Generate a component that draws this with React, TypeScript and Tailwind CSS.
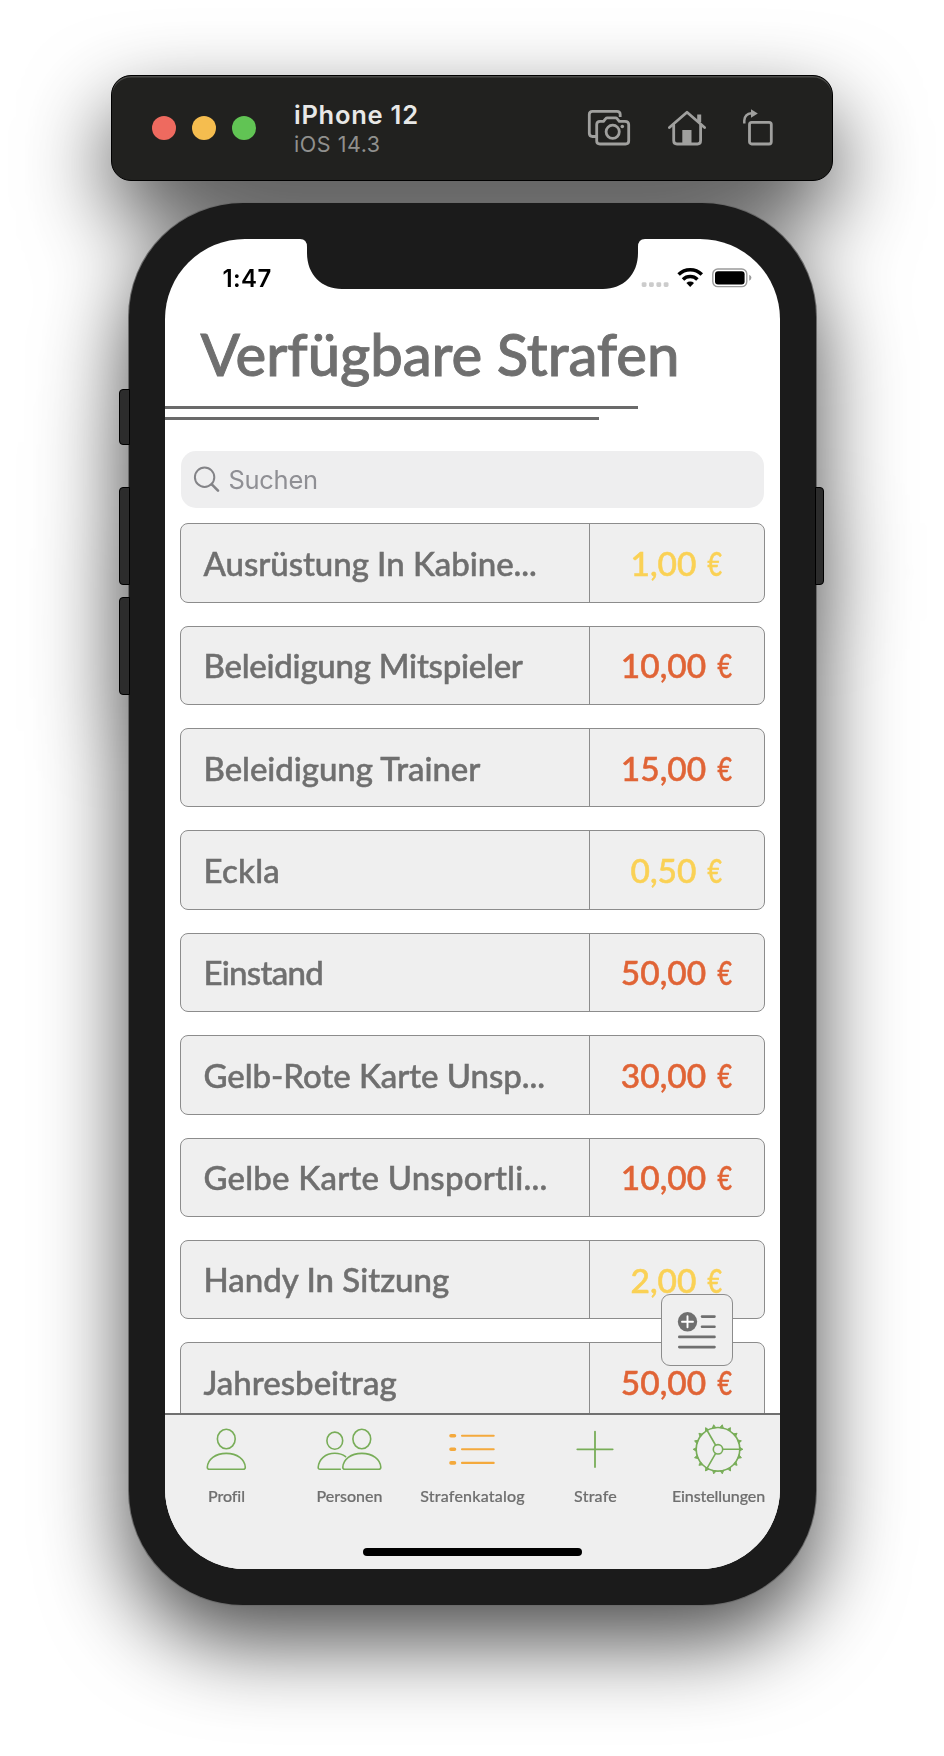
type Penalty = { name: string; tracking: string; amount: string; high: boolean };

const penalties: Penalty[] = [
  { name: "Ausrüstung In Kabine...", tracking: "tracking-[-0.050px]", amount: "1,00", high: false },
  { name: "Beleidigung Mitspieler", tracking: "tracking-[-0.250px]", amount: "10,00", high: true },
  { name: "Beleidigung Trainer", tracking: "tracking-[-0.050px]", amount: "15,00", high: true },
  { name: "Eckla", tracking: "tracking-[0.2px]", amount: "0,50", high: false },
  { name: "Einstand", tracking: "tracking-[-0.7px]", amount: "50,00", high: true },
  { name: "Gelb-Rote Karte Unsp...", tracking: "tracking-[-0.050px]", amount: "30,00", high: true },
  { name: "Gelbe Karte Unsportli...", tracking: "tracking-[0.2px]", amount: "10,00", high: true },
  { name: "Handy In Sitzung", tracking: "tracking-[0px]", amount: "2,00", high: false },
  { name: "Jahresbeitrag", tracking: "tracking-[0px]", amount: "50,00", high: true },
];

const sans = "font-[Inter,'Liberation_Sans',sans-serif]";
const display = "font-[Lato,'Open_Sans',sans-serif]";

function CameraIcon() {
  return (
    <svg width="44" height="40" viewBox="0 0 44 40" fill="none" stroke="#a0a09e" strokeWidth="2.8" strokeLinejoin="round">
      <path d="M10 28.5H5.5Q2.3 28.5 2.3 25.3V6.500Q2.3 3.3 5.5 3.3H30Q33.2 3.3 33.2 6.5V9" />
      <path d="M13 13.3H16.5L18.7 10.6Q19.3 9.8 20.3 9.8H28.5Q29.5 9.8 30.1 10.6L32.3 13.3H38Q41.7 13.3 41.7 16.6V33Q41.7 36 38.500 36H13Q9.7 36 9.7 33V16.600Q9.7 13.3 13 13.3Z" />
      <circle cx="25.7" cy="23.8" r="6.6" />
      <circle cx="35.3" cy="18.500" r="1.8" fill="#a0a09e" stroke="none" />
    </svg>
  );
}

function HomeIcon() {
  return (
    <svg width="40" height="40" viewBox="0 0 40 40" fill="none" stroke="#a0a09e" strokeWidth="2.8" strokeLinejoin="round" strokeLinecap="round">
      <path d="M2.4 19.500L20 4.2L37.6 19.500" />
      <path d="M6.7 17V32.500Q6.7 36 10 36H30.500Q33.6 36 33.6 32.500V17" />
      <path d="M32.2 6.500V14" strokeWidth="4" strokeLinecap="butt" />
      <path d="M15.3 22H24.500V36H15.300Z" fill="#a0a09e" stroke="none" />
    </svg>
  );
}

function RotateIcon() {
  return (
    <svg width="32" height="40" viewBox="0 0 32 40" fill="none" stroke="#a0a09e" strokeWidth="2.8">
      <rect x="7.500" y="14.3" width="21.8" height="21.7" rx="2.200" />
      <path d="M2.300 15.500V12.500Q2.800 6 9.500 5.300" strokeWidth="2.500" />
      <path d="M9 1.200L15.800 5.500L9 9.800Z" fill="#a0a09e" stroke="none" />
    </svg>
  );
}

function Toolbar() {
  return (
    <header className="box-border flex h-[106px] w-[722px] items-center rounded-[20px] border border-black bg-[#21211f] pl-[40px] shadow-[inset_0_1.5px_0_#4b4b49]">
      <div className="flex gap-4">
        <span className="size-6 rounded-full bg-[#ee6a5f]" />
        <span className="size-6 rounded-full bg-[#f5bd4f]" />
        <span className="size-6 rounded-full bg-[#61c454]" />
      </div>
      <div className={`${sans} ml-[38px] flex flex-col pt-[3px]`}>
        <span className="text-[25.5px] leading-[30px] font-semibold tracking-[0.75px] text-[#e8e8e7]">iPhone 12</span>
        <span className="text-[21.5px] leading-[29px] tracking-[0.55px] text-[#90908e]">iOS 14.3</span>
      </div>
      <div className="mr-[58px] ml-auto flex items-center">
        <CameraIcon />
        <span className="ml-[36px] flex"><HomeIcon /></span>
        <span className="ml-[35px] flex"><RotateIcon /></span>
      </div>
    </header>
  );
}

function StatusBar() {
  return (
    <div className="flex h-[50px] shrink-0 items-center pt-[28px] pr-[28px] pl-[58px]">
      <span className={`${sans} pt-[1px] text-[24px] leading-[24px] font-semibold tracking-[0.4px] text-black`}>1:47</span>
      <svg className="ml-auto" width="112" height="24" viewBox="0 0 112 24" fill="none">
        <g fill="#cccccc">
          <rect x="1.7" y="16.2" width="4.8" height="4.8" rx="1.4" />
          <rect x="9" y="16.2" width="4.8" height="4.8" rx="1.4" />
          <rect x="16.4" y="16.2" width="4.8" height="4.8" rx="1.4" />
          <rect x="23.7" y="16.2" width="4.8" height="4.8" rx="1.4" />
        </g>
        <g stroke="#000" strokeWidth="3.5">
          <path d="M38.6 8.6A16.6 16.6 0 0 1 61.8 8.6" />
          <path d="M43 13.4A10.3 10.3 0 0 1 57.4 13.4" />
        </g>
        <path d="M50.2 21L46.4 16.9A5.6 5.6 0 0 1 54 16.9Z" fill="#000" />
        <rect x="72.8" y="3" width="34" height="17.6" rx="5" stroke="#9b9b9b" strokeWidth="1.4" />
        <rect x="75" y="5.2" width="29.6" height="13.2" rx="3" fill="#000" />
        <path d="M109.2 8.8Q111.4 9.8 111.4 11.8T109.2 14.8Z" fill="#9b9b9b" />
      </svg>
    </div>
  );
}

function SearchField() {
  return (
    <div className="mt-[31px] ml-[16px] flex h-[57px] w-[583px] shrink-0 items-center rounded-[15px] bg-[#eeeeef] pl-[12px]">
      <svg width="28" height="28" viewBox="0 0 28 28" fill="none" stroke="#838387" strokeWidth="2" strokeLinecap="round">
        <circle cx="11.6" cy="11.2" r="9.7" />
        <path d="M18.8 18.4L25 24.6" strokeWidth="2.6" />
      </svg>
      <span className={`${sans} ml-[8px] pt-[1px] text-[25.5px] leading-[30px] tracking-[-0.3px] text-[#8f8f94]`}>Suchen</span>
    </div>
  );
}

function PenaltyRow({ item }: { item: Penalty }) {
  return (
    <li className="flex h-[79.4px] shrink-0 overflow-hidden rounded-[8px] border border-[#8c8c8c] bg-[#efefef]">
      <span className={`${display} ${item.tracking} flex w-[409px] items-center border-r border-[#8c8c8c] pt-[1px] pl-[23px] text-[33px] font-medium whitespace-nowrap text-[#6f6f6f] [-webkit-text-stroke:0.5px]`}>
        {item.name}
      </span>
      <span className={`${display} flex flex-1 items-center justify-center pl-[2px] text-[33.5px] font-medium [-webkit-text-stroke:0.5px] ${item.high ? "text-[#e06436]" : "text-[#fad155]"}`}>
        {item.amount}
        <span className="ml-[9px] inline-block w-[19px] origin-center scale-x-[0.75]">€</span>
      </span>
    </li>
  );
}

const iconProps = { width: 80, height: 56, viewBox: "0 0 80 56", fill: "none", strokeLinecap: "round" as const, strokeLinejoin: "round" as const };

function ProfileIcon() {
  return (
    <svg {...iconProps} stroke="#78ad58" strokeWidth="1.6">
      <ellipse cx="40.3" cy="17" rx="8.9" ry="9.7" />
      <path d="M23.3 47.3Q21.3 47.3 21.3 45.3C21.7 37.500 29.300 31.400 40.300 31.400S58.900 37.500 59.300 45.300Q59.300 47.300 57.300 47.300Z" />
    </svg>
  );
}

function PeopleIcon() {
  return (
    <svg {...iconProps} stroke="#78ad58" strokeWidth="1.6">
      <ellipse cx="25.8" cy="18.7" rx="7.9" ry="8.6" />
      <path d="M31.300 47.300H11.100Q9.100 47.300 9.200 45.300C9.700 37.300 16.300 31.300 25.800 31.300Q32.300 31.400 36.600 34.700" />
      <ellipse cx="52.800" cy="17" rx="8.900" ry="9.700" />
      <path d="M35.800 47.300Q33.800 47.300 33.800 45.300C34.200 37.500 41.800 31.400 52.800 31.400S71.400 37.500 71.800 45.300Q71.800 47.300 69.800 47.300Z" />
    </svg>
  );
}

function ListIcon() {
  return (
    <svg {...iconProps} stroke="#f4a93c">
      <path d="M19 13.7H22.5M19 27.3H22.5M19 40.9H22.5" strokeWidth="3.6" />
      <path d="M30 13.7H61.700M30 27.300H61.700M30 40.900H61.700" strokeWidth="2.100" />
    </svg>
  );
}

function PlusIcon() {
  return (
    <svg {...iconProps} stroke="#78ad58" strokeWidth="1.8">
      <path d="M22.300 27.300H57.700M40 9.600V45" />
    </svg>
  );
}

function GearIcon() {
  const teeth = Array.from({ length: 18 }, (_, i) => i * 20);
  return (
    <svg {...iconProps} stroke="#78ad58" strokeWidth="1.6">
      <g transform="translate(40 27.3)">
        <circle r="21.8" />
        <circle r="4.7" />
        <path d="M4.7 0H22M-2.350 4.070L-11 19.050M-2.350 -4.070L-11 -19.050" />
        {teeth.map((angle) => (
          <path key={angle} d="M22 -1.800L24.900 0L22 1.400Z" fill="#78ad58" strokeWidth="0.900" transform={`rotate(${angle})`} />
        ))}
      </g>
    </svg>
  );
}

const tabs = [
  { label: "Profil", icon: <ProfileIcon />, tracking: "tracking-[-0.1px]" },
  { label: "Personen", icon: <PeopleIcon />, tracking: "tracking-[0px]" },
  { label: "Strafenkatalog", icon: <ListIcon />, tracking: "tracking-[0.2px]" },
  { label: "Strafe", icon: <PlusIcon />, tracking: "tracking-[0.2px]" },
  { label: "Einstellungen", icon: <GearIcon />, tracking: "tracking-[-0.1px]" },
];

function TabBar() {
  return (
    <nav className="flex h-[156px] shrink-0 flex-col items-center border-t-2 border-[#707070] bg-[#efefef]">
      <ul className="flex w-full pt-[7px]">
        {tabs.map((tab) => (
          <li key={tab.label} className="flex w-[123px] flex-col items-center">
            {tab.icon}
            <span className={`${display} ${tab.tracking} mt-[8px] pl-[1px] text-[16px] leading-[20px] font-medium text-[#6f6f6f] [-webkit-text-stroke:0.2px]`}>{tab.label}</span>
          </li>
        ))}
      </ul>
      <span className="mt-auto mb-[13px] h-[8px] w-[219px] rounded-full bg-black" />
    </nav>
  );
}

function AddButton() {
  return (
    <button className="absolute top-[1055px] left-[496px] flex size-[72px] items-center justify-center rounded-[9px] border border-[#8c8c8c] bg-[#efefef]">
      <svg width="40" height="40" viewBox="0 0 40 40" fill="none" stroke="#6f6f6f" strokeWidth="2.6" strokeLinecap="round">
        <circle cx="10.5" cy="11.8" r="9.7" fill="#6f6f6f" stroke="none" />
        <path d="M5 11.8H16M10.5 6.3V17.3" stroke="#fff" strokeWidth="1.9" />
        <path d="M25 6.6H37.5M25 16.7H37.5M2.3 26.9H37.5M2.3 37.1H37.5" />
      </svg>
    </button>
  );
}

function Screen() {
  return (
    <main className="relative flex h-[1330px] w-[615px] flex-col overflow-hidden rounded-[80px] bg-white">
      <StatusBar />
      <svg className="absolute -top-px left-[135px]" width="345" height="51" viewBox="0 -1 345 51">
        <path d="M0 -1V0Q7 0 7 8V14C7 36 22 50 42 50H303C323 50 338 36 338 14V8Q338 0 345 0V-1Z" fill="#1b1b1b" />
      </svg>
      <h1 className={`${display} mt-[30px] ml-[36px] text-[58px] leading-[70px] font-medium tracking-[-0.1px] whitespace-nowrap text-[#6f6f6f] [-webkit-text-stroke:0.9px]`}>Verfügbare Strafen</h1>
      <div className="mt-[17px] h-[3px] w-[473px] shrink-0 bg-[#6a6a6a]" />
      <div className="mt-[8px] h-[3px] w-[434px] shrink-0 bg-[#6a6a6a]" />
      <SearchField />
      <ul className="mt-[15.3px] flex min-h-0 flex-1 flex-col gap-[23px] overflow-hidden pr-[15px] pl-[15px]">
        {penalties.map((item) => (
          <PenaltyRow key={item.name} item={item} />
        ))}
      </ul>
      <TabBar />
      <AddButton />
    </main>
  );
}

export default function App() {
  return (
    <div className="h-[1756px] w-[944px] overflow-hidden bg-white pt-[75px]">
      <div className="flex flex-col items-center gap-[22px] [filter:drop-shadow(0_36px_43px_rgba(0,0,0,0.7))]">
        <Toolbar />
        <div className="relative rounded-[114px] bg-[#1b1b1b] p-[36px] shadow-[0_0_0_1px_#6a6a6a]">
          <span className="absolute top-[186px] -left-[10px] h-[56px] w-[11px] rounded-l-[4px] border border-black bg-[#2c2c2c]" />
          <span className="absolute top-[284px] -left-[10px] h-[98px] w-[11px] rounded-l-[4px] border border-black bg-[#2c2c2c]" />
          <span className="absolute top-[394px] -left-[10px] h-[98px] w-[11px] rounded-l-[4px] border border-black bg-[#2c2c2c]" />
          <span className="absolute top-[284px] -right-[8px] h-[98px] w-[9px] rounded-r-[4px] border border-black bg-[#2c2c2c]" />
          <Screen />
        </div>
      </div>
    </div>
  );
}
